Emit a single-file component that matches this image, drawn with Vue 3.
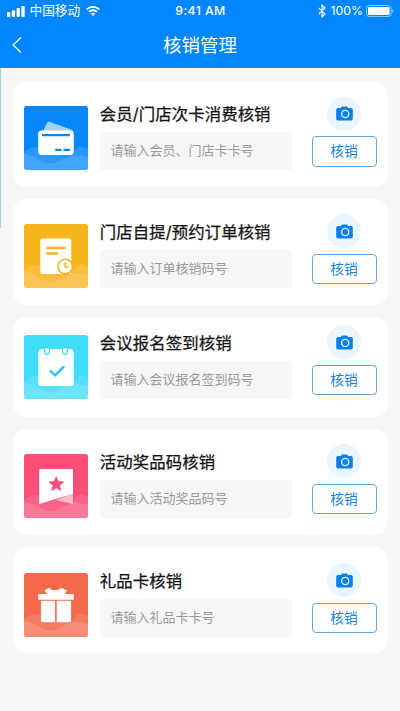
<script setup>
const cards = [
  { kind: 'card', title: '会员/门店次卡消费核销', hint: '请输入会员、门店卡卡号', color: '#0688fb' },
  { kind: 'order', title: '门店自提/预约订单核销', hint: '请输入订单核销码号', color: '#f8b51e' },
  { kind: 'meeting', title: '会议报名签到核销', hint: '请输入会议报名签到码号', color: '#3fdcfa' },
  { kind: 'prize', title: '活动奖品码核销', hint: '请输入活动奖品码号', color: '#f94f78' },
  { kind: 'gift', title: '礼品卡核销', hint: '请输入礼品卡卡号', color: '#f4694b' }
]
</script>

<template>
  <div class="page">
    <header class="header">
      <div class="status">
        <div class="carrier">
          <svg class="signal" width="18" height="11" viewBox="0 0 18 11" fill="#fff">
            <rect x="0" y="6" width="3.3" height="5" rx="1" />
            <rect x="4.8" y="4.2" width="3.3" height="6.8" rx="1" />
            <rect x="9.6" y="2.1" width="3.3" height="8.9" rx="1" />
            <rect x="14.4" y="0" width="3.3" height="11" rx="1" />
          </svg>
          <span class="operator">中国移动</span>
          <svg class="wifi" width="14" height="10" viewBox="0 0 14 10" fill="none" stroke="#fff" stroke-width="1.7">
            <path d="M.6 3.5Q7-1.8 13.4 3.5M2.9 5.9Q7 2.6 11.1 5.9" />
            <path d="M4.7 7.5Q7 5.8 9.3 7.5L7 9.9Z" fill="#fff" stroke="none" />
          </svg>
        </div>
        <span class="time">9:41 AM</span>
        <div class="power">
          <svg width="8" height="14" viewBox="0 0 8 14" fill="none" stroke="#fff" stroke-width="1.1">
            <path d="M.7 3.8 7 10 4 13V1L7 4 .7 10.2" />
          </svg>
          <span>100%</span>
          <svg width="28" height="12" viewBox="0 0 28 12">
            <rect x=".5" y=".5" width="24.5" height="11" rx="2.6" fill="none" stroke="#8dc8ff" />
            <rect x="2" y="2" width="21.5" height="8" rx="1.3" fill="#fff" />
            <path d="M26.3 4v4Q27.6 7.3 27.6 6T26.3 4" fill="#8dc8ff" />
          </svg>
        </div>
      </div>
      <div class="nav">
        <svg class="back" width="10" height="16" viewBox="0 0 10 16" fill="none" stroke="#fff" stroke-width="1.2">
          <path d="M9 .5 1 8l8 7.5" />
        </svg>
        <h1>核销管理</h1>
      </div>
    </header>
    <main class="list">
      <section v-for="c in cards" :key="c.kind" class="item" :class="c.kind">
        <svg class="icon" width="64" height="64" viewBox="0 0 64 64">
          <rect width="64" height="64" rx="2.5" :fill="c.color" />
          <path d="M0 46Q9 38 20 42.5T40 48 52 43.5 64 43V61.5Q64 64 61.5 64H2.5Q0 64 0 61.5Z" fill="#fff" opacity=".13" />
          <path d="M0 48Q8 49 17 54.5T36 54.5 52 49 64 51V61.5Q64 64 61.5 64H2.5Q0 64 0 61.5Z" fill="#fff" opacity=".13" />
          <g v-if="c.kind === 'card'">
            <path d="M19 25 23 17Q24 15.3 26 16L47 23.5Q49 24.3 49 26Z" fill="#fff" opacity=".62" />
            <rect x="14.2" y="24.5" width="35.6" height="24.5" rx="3.3" fill="#fff" />
            <path d="M18 29.2h28M31.2 43.8h6.3M39.5 43.8H46" :stroke="c.color" stroke-width="2.2" />
          </g>
          <g v-else-if="c.kind === 'order'">
            <rect x="16.3" y="14.5" width="31" height="35.5" rx="2.3" fill="#fff" />
            <path d="M23.5 24h17M23.5 29.5h9.5" :stroke="c.color" stroke-width="2.7" stroke-linecap="round" />
            <circle cx="41.2" cy="42.5" r="8.1" :fill="c.color" />
            <circle cx="41.2" cy="42.5" r="6.5" fill="#fff" />
            <path d="M41.2 38.5v4.5h3.8" fill="none" :stroke="c.color" stroke-width="1.7" />
          </g>
          <g v-else-if="c.kind === 'meeting'">
            <rect x="14.2" y="14" width="35.6" height="37" rx="3.3" fill="#fff" />
            <path d="M20.7 13.5v3.6a2.3 2.3 0 0 0 4.6 0v-3.6M38.7 13.5v3.6a2.3 2.3 0 0 0 4.6 0v-3.6" fill="#fff" :stroke="c.color" stroke-width="1.3" />
            <path d="m26.5 36.2 4.7 4 8.3-8.2" fill="none" stroke="#39c5e4" stroke-width="2.5" stroke-linecap="round" />
          </g>
          <g v-else-if="c.kind === 'prize'">
            <path d="M32 46 49 39.5V50Z" fill="#fff" opacity=".6" />
            <path d="M15.2 15H49v24.7L15.2 50Z" fill="#fff" />
            <path d="m32.3 22.5 2.1 4.8 5.3.6-4 3.5 1.2 5.2-4.6-2.7-4.6 2.7 1.2-5.2-4-3.5 5.3-.6Z" :fill="c.color" :stroke="c.color" stroke-width=".6" />
          </g>
          <g v-else fill="#fff">
            <path d="M24 22 20.5 17.5 24.8 14.8Q28 17.7 31 17 34.4 17.8 37.5 14.8L43 17.5 40 22Z" />
            <rect x="14.2" y="21" width="35.6" height="5.8" rx=".4" />
            <path d="M16.9 27.8h14.2v21.4H19.4q-2.5 0-2.5-2.5ZM32.7 27.8h14.4v18.9q0 2.5-2.5 2.5H32.7Z" />
          </g>
        </svg>
        <div class="body">
          <h2>{{ c.title }}</h2>
          <div class="field">{{ c.hint }}</div>
        </div>
        <div class="actions">
          <div class="camera">
            <svg width="17" height="15" viewBox="0 0 17 15">
              <path d="M2 2H4.8L6 .4h5L12.2 2H15q1.8 0 1.8 1.8v8.9q0 1.8-1.8 1.8H2Q.2 14.5.2 12.7V3.8Q.2 2 2 2Z" fill="#0b80ed" />
              <circle cx="9.2" cy="8" r="3.6" fill="none" stroke="#eaf6ff" stroke-width="1.3" />
            </svg>
          </div>
          <button>核销</button>
        </div>
      </section>
    </main>
    <div class="edge"></div>
  </div>
</template>

<style>
body {
  background: #f6f6f6;
}
</style>

<style scoped>
.page {
  position: relative;
  box-sizing: border-box;
  height: 711px;
  overflow: hidden;
  background: #f6f6f6;
  font-family: Inter, "Noto Sans CJK SC", sans-serif;
}
.header {
  height: 68px;
  background: #0286fe;
  color: #fff;
}
.status {
  display: grid;
  grid-template-columns: 1fr auto 1fr;
  align-items: center;
  height: 22px;
  padding: 0 6px 0 7px;
  font-size: 12px;
  line-height: 22px;
}
.carrier,
.power {
  display: flex;
  align-items: center;
}
.operator {
  margin: 0 6px 0 4.5px;
  font-size: 12.7px;
}
.time {
  font-size: 12.3px;
  font-weight: 500;
  letter-spacing: 0.4px;
}
.power {
  justify-content: flex-end;
  gap: 4px;
}
.power span {
  margin-right: -1px;
  font-size: 12.3px;
}
.nav {
  display: grid;
  grid-template-columns: 40px 1fr 40px;
  align-items: center;
  height: 46px;
}
.back {
  margin-left: 12px;
}
h1 {
  margin: 0;
  text-align: center;
  font-size: 18.5px;
  line-height: 46px;
  font-weight: 400;
}
.list {
  display: flex;
  flex-direction: column;
  gap: 12.6px;
  padding: 13.5px 12.5px 0 13px;
}
.item {
  display: flex;
  box-sizing: border-box;
  height: 105.4px;
  padding: 24.5px 11px 0;
  border-radius: 14px;
  background: #fff;
}
.meeting {
  height: 99.4px;
  padding-top: 17.5px;
}
.gift {
  padding-top: 25.5px;
}
.icon {
  flex: none;
}
.body {
  width: 192px;
  margin-left: 12.4px;
}
h2 {
  margin: 0 0 0 -0.7px;
  height: 26px;
  color: #111;
  font-size: 16.4px;
  line-height: 16px;
  font-weight: 400;
  letter-spacing: 0.1px;
  -webkit-text-stroke: 0.25px #111;
  white-space: nowrap;
}
.field {
  box-sizing: border-box;
  height: 38px;
  padding-left: 10px;
  border-radius: 3px;
  background: #f6f6f6;
  color: #999;
  font-size: 13px;
  line-height: 37px;
  white-space: nowrap;
}
.actions {
  display: flex;
  flex-direction: column;
  align-items: center;
  width: 65px;
  margin: -9.5px 0 0 20px;
}
.camera {
  display: flex;
  align-items: center;
  justify-content: center;
  width: 34px;
  height: 34px;
  border-radius: 50%;
  background: #eaf6ff;
}
button {
  box-sizing: border-box;
  width: 65px;
  height: 30.5px;
  margin-top: 5.5px;
  padding: 0;
  border: 1px solid #5fa6e6;
  border-radius: 4px;
  background: #fff;
  color: #1580dd;
  font-family: inherit;
  font-size: 13.7px;
  line-height: 28px;
}
.edge {
  position: absolute;
  left: 0;
  top: 68px;
  width: 1px;
  height: 160px;
  background: #a6cfe0;
}
</style>
